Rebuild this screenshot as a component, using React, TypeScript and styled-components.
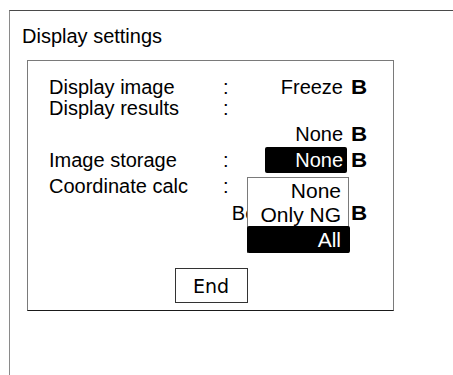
import React from "react";
import styled, { createGlobalStyle } from "styled-components";

const GlobalStyle = createGlobalStyle`
    html, body {
        margin: 0;
        padding: 0;
        background: #fff;
    }
    body {
        font-family: "Liberation Sans", Arial, sans-serif;
        color: #000;
        overflow: hidden;
    }
`;

const Frame = styled.div`
    margin: 10px 0 0 9px;
    min-height: 365px;
    border-top: 1px solid #4a4a4a;
    border-left: 1px solid #8a8a8a;
    padding-top: 13px;
    box-sizing: border-box;
`;

const Title = styled.div`
    font-size: 20px;
    line-height: 24px;
    padding-left: 12px;
`;

const Panel = styled.div`
    position: relative;
    margin: 12px 0 0 17px;
    width: 367px;
    height: 251px;
    box-sizing: border-box;
    border: 1px solid #7a7a7a;
    border-bottom-color: #1a1a1a;
    padding: 16px 0 0 21px;
    display: flex;
    flex-direction: column;
`;

const Row = styled.div<{ $h: number; $mt?: number }>`
    display: grid;
    grid-template-columns: 174px 24px 100px auto;
    height: ${(p) => p.$h}px;
    line-height: ${(p) => p.$h}px;
    margin-top: ${(p) => p.$mt ?? 0}px;
    font-size: 20px;
    white-space: nowrap;
`;

const Label = styled.span``;

const Colon = styled.span``;

const Value = styled.div`
    position: relative;
    display: flex;
    justify-content: flex-end;
    align-items: stretch;
`;

const ValueText = styled.span<{ $active?: boolean }>`
    display: block;
    padding-right: 4px;
    text-align: right;
    ${(p) =>
        p.$active &&
        `
        width: 82px;
        box-sizing: border-box;
        background: #000;
        color: #fff;
        border-radius: 2px;
    `}
`;

const Mark = styled.span`
    display: inline-block;
    font-weight: bold;
    margin-left: 4px;
    font-size: 20px;
    transform: scaleX(1.12);
    transform-origin: left center;
`;

const Popup = styled.div`
    position: absolute;
    left: 0;
    top: 4px;
    width: 102px;
    z-index: 2;
    background: #fff;
    border: 1px solid #7a7a7a;
    border-bottom: none;
    box-sizing: border-box;
    font-size: 21px;
`;

const Option = styled.div<{ $h: number; $active?: boolean }>`
    height: ${(p) => p.$h}px;
    line-height: ${(p) => p.$h}px;
    text-align: right;
    padding-right: 7px;
    ${(p) =>
        p.$active &&
        `
        margin: 0 -2px 0 -1px;
        padding-right: 9px;
        background: #000;
        color: #fff;
        border-radius: 2px;
    `}
`;

const Footer = styled.div`
    display: flex;
    justify-content: center;
    margin: 41px 0 0 -21px;
`;

const EndButton = styled.button`
    width: 73px;
    height: 35px;
    box-sizing: border-box;
    border: 1px solid #333;
    background: #fff;
    font-family: "DejaVu Sans", sans-serif;
    font-size: 19px;
    color: #000;
    padding: 0;
    margin-left: 1px;
`;

const App: React.FC = () => {
    return (
        <>
            <GlobalStyle />
            <Frame>
                <Title>Display settings</Title>
                <Panel>
                    <Row $h={21}>
                        <Label>Display image</Label>
                        <Colon>:</Colon>
                        <Value>
                            <ValueText>Freeze</ValueText>
                        </Value>
                        <Mark>B</Mark>
                    </Row>
                    <Row $h={21}>
                        <Label>Display results</Label>
                        <Colon>:</Colon>
                        <Value />
                        <span />
                    </Row>
                    <Row $h={26} $mt={2}>
                        <Label />
                        <Colon />
                        <Value>
                            <ValueText>None</ValueText>
                        </Value>
                        <Mark>B</Mark>
                    </Row>
                    <Row $h={26}>
                        <Label>Image storage</Label>
                        <Colon>:</Colon>
                        <Value>
                            <ValueText $active>None</ValueText>
                        </Value>
                        <Mark>B</Mark>
                    </Row>
                    <Row $h={26}>
                        <Label>Coordinate calc</Label>
                        <Colon>:</Colon>
                        <Value>
                            <Popup>
                                <Option $h={25}>None</Option>
                                <Option $h={23}>Only NG</Option>
                                <Option $h={27} $active>
                                    All
                                </Option>
                            </Popup>
                        </Value>
                        <span />
                    </Row>
                    <Row $h={28}>
                        <Label />
                        <Colon />
                        <Value>
                            <ValueText>Before calib.</ValueText>
                        </Value>
                        <Mark>B</Mark>
                    </Row>
                    <Footer>
                        <EndButton>End</EndButton>
                    </Footer>
                </Panel>
            </Frame>
        </>
    );
};

export default App;
